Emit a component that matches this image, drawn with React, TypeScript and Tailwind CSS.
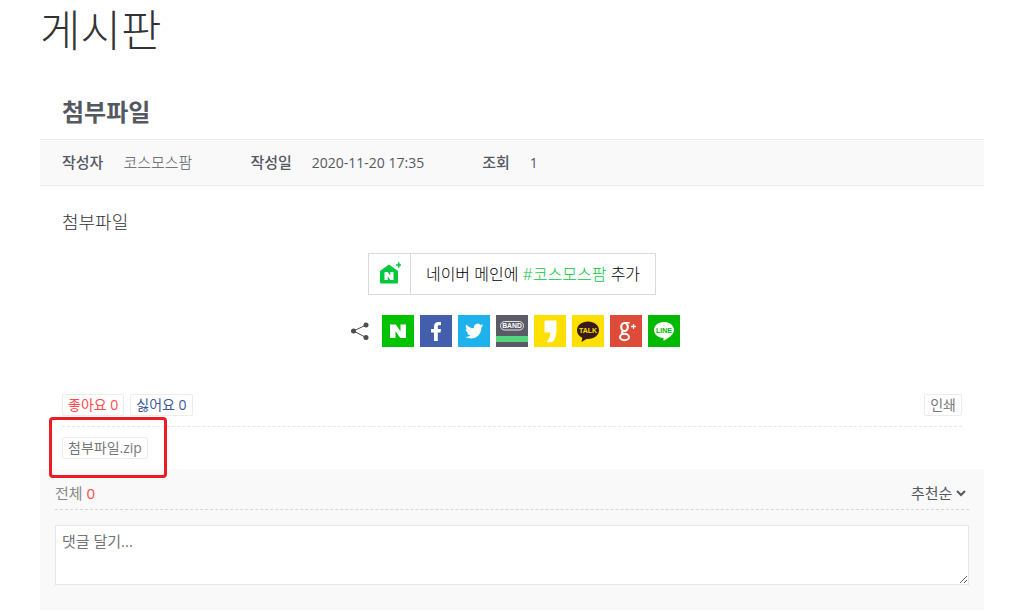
import type { ReactNode } from "react"

const meta = [
  { label: "작성자", value: "코스모스팜" },
  { label: "작성일", value: "2020-11-20 17:35" },
  { label: "조회", value: "1" },
]

const shareLinks: { name: string; className: string; icon: ReactNode }[] = [
  {
    name: "네이버",
    className: "bg-[#00c300]",
    icon: <path fill="#fff" d="M8 9.500h5.800l4.700 7v-7H24V23h-5.800l-4.700-7v7H8z" />,
  },
  {
    name: "페이스북",
    className: "bg-[#435eac]",
    icon: (
      <path fill="#fff" d="M14 26v-8.500h-3v-3.500h3v-2.500C14 8.600 15.600 7 18.300 7H21v3.300h-1.800c-1.100 0-1.400.5-1.400 1.400V14H21l-.5 3.500h-2.700V26z" />
    ),
  },
  {
    name: "트위터",
    className: "bg-[#1eb2ed]",
    icon: (
      <path
        fill="#fff"
        transform="translate(7 7) scale(0.76)"
        d="M23.950 4.570a10 10 0 0 1-2.820.770 4.960 4.960 0 0 0 2.160-2.720c-.95.550-2 .950-3.120 1.180a4.920 4.920 0 0 0-8.380 4.480C7.690 8.090 4.070 6.130 1.640 3.160a4.820 4.820 0 0 0-.67 2.480c0 1.710.87 3.210 2.190 4.090a4.900 4.900 0 0 1-2.230-.61v.06a4.920 4.920 0 0 0 3.950 4.820 5 5 0 0 1-2.210.09 4.940 4.940 0 0 0 4.600 3.420A9.870 9.870 0 0 1 0 19.540a13.990 13.990 0 0 0 7.550 2.210c9.050 0 14-7.500 14-13.980 0-.21 0-.42-.02-.63a9.940 9.940 0 0 0 2.460-2.550z"
      />
    ),
  },
  {
    name: "밴드",
    className: "bg-[#5b5a67]",
    icon: (
      <>
        <rect x="4.500" y="6.500" width="23" height="8.500" rx="4.200" fill="none" stroke="#e4e4e8" />
        <text x="16" y="13.300" textAnchor="middle" fontSize="6.800" fontWeight="700" fill="#fff" className="font-['Liberation_Sans',sans-serif]">BAND</text>
        <path fill="#54d67f" d="M0 21h32v6H0z" />
      </>
    ),
  },
  {
    name: "카카오스토리",
    className: "bg-[#fde000]",
    icon: <path fill="#fff" d="M10.500 5.500h12V15c0 5.500-1.500 10-4.500 12.300h-5.500c2.500-2.800 3.900-6 4-9.800h-6z" />,
  },
  {
    name: "카카오톡",
    className: "bg-[#fde000]",
    icon: (
      <>
        <path fill="#391b1b" d="M16 6.500c6.200 0 11 3.900 11 8.700s-4.800 8.700-11 8.700h-1.500L9.500 27l.8-4.300C7 21.200 5 18.500 5 15.200c0-4.800 4.800-8.700 11-8.700z" />
        <text x="16" y="17.900" textAnchor="middle" fontSize="7" fontWeight="700" fill="#fde000" className="font-['Liberation_Sans',sans-serif]">TALK</text>
      </>
    ),
  },
  {
    name: "구글 플러스",
    className: "bg-[#dd4b39]",
    icon: (
      <>
        <g fill="none" stroke="#fff">
          <ellipse cx="14.500" cy="12" rx="3.300" ry="4" strokeWidth="2.200" />
          <path strokeWidth="1.600" d="M15 7.800h4.800M13 16c-2.300 1.200-1.800 2.300 1 2.600" />
          <ellipse cx="14.500" cy="22" rx="4.500" ry="3.200" strokeWidth="2" />
        </g>
        <path fill="#fff" d="M22.900 9h1.200v1.800h1.800v1.400h-1.800V14h-1.200v-1.800h-1.800v-1.400h1.800z" />
      </>
    ),
  },
  {
    name: "라인",
    className: "bg-[#00b900]",
    icon: (
      <>
        <path fill="#fff" d="M16 7c5.500 0 10 3.500 10 8 0 4-5 8-10 10.500-.8.300-.6-.7-.5-2.500C10 22.800 6 19.400 6 15c0-4.500 4.500-8 10-8z" />
        <text x="16" y="17.500" textAnchor="middle" fontSize="7" fontWeight="700" fill="#00b900" className="font-['Liberation_Sans',sans-serif]">LINE</text>
      </>
    ),
  },
]

const smallButton = "h-[22px] rounded-xs border border-[#ececec] bg-white px-[5px] text-sm leading-5"

function NaverHouse() {
  return (
    <svg viewBox="0 0 22 24" className="h-6 w-[22px]" aria-hidden="true">
      <path fill="#03c73c" d="M1 9 10 2.500 19 9v11.500q0 1-1 1H2q-1 0-1-1zM17 2.200h2v-2h1.500v2h2v1.500h-2v2H19v-2h-2z" />
      <path fill="#fff" d="M5.500 10h3.300l2.500 3.800V10h3.200v8h-3.300l-2.500-3.800V18H5.500z" />
    </svg>
  )
}

function ShareIcon() {
  return (
    <svg viewBox="0 0 20 20" className="h-5 w-5" aria-label="공유">
      <path d="M16 4 3.500 10 16 16.500" fill="none" stroke="#4d4d4d" />
      <g fill="#4d4d4d">
        <circle cx="16" cy="4" r="2.500" />
        <circle cx="3.500" cy="10" r="2.500" />
        <circle cx="16" cy="16.500" r="2.500" />
      </g>
    </svg>
  )
}

function ShareRow() {
  return (
    <div className="mt-5 flex items-center justify-center gap-1.5">
      <div className="flex w-8 justify-center">
        <ShareIcon />
      </div>
      {shareLinks.map((link) => (
        <a key={link.name} href="#share" aria-label={link.name} className={`block h-8 w-8 ${link.className}`}>
          <svg viewBox="0 0 32 32" className="h-8 w-8" aria-hidden="true">
            {link.icon}
          </svg>
        </a>
      ))}
    </div>
  )
}

function Comments() {
  return (
    <section className="bg-[#f9f9f9] px-[15px] pt-3 pb-[25px]">
      <div className="flex h-[29px] items-center justify-between border-b border-dashed border-[#d5d5d5] pb-1 text-[15px] text-[#888]">
        <p>
          전체 <span className="text-[#ff4b3e]">0</span>
        </p>
        <select aria-label="정렬" className="bg-transparent text-[#545861]">
          <option>추천순</option>
          <option>최신순</option>
        </select>
      </div>
      <textarea
        aria-label="댓글"
        placeholder="댓글 달기..."
        className="mt-[15px] block h-[60px] w-full border border-[#e6e6e6] bg-white px-1.5 py-1 text-[15px] leading-[22px] placeholder:text-[#757575]"
      />
    </section>
  )
}

export default function App() {
  return (
    <main className="bg-white pr-9 pl-10 font-['Open_Sans','Noto_Sans_CJK_KR',sans-serif] text-[#333]">
      <h1 className="pt-0.5 text-[44px] leading-[56px] font-light">게시판</h1>

      <article>
        <h2 className="mt-[38px] mb-[11px] px-[22px] text-2xl font-bold text-[#545861]">첨부파일</h2>
        <dl className="flex h-[47px] items-center gap-[58px] border-y border-[#ececec] bg-[#f9f9f9] px-[22px] text-[#545861]">
          {meta.map((item) => (
            <div key={item.label} className="flex items-center gap-5">
              <dt className="text-[15px] font-medium">{item.label}</dt>
              <dd className={item.label === "작성자" ? "text-[15px] font-light" : "text-sm"}>{item.value}</dd>
            </div>
          ))}
        </dl>

        <div className="px-[22px]">
          <p className="mt-5 text-lg leading-8 font-light">첨부파일</p>

          <div className="mt-[15px] flex justify-center">
            <a href="#naver" className="flex h-[42px] w-72 border border-[#dadada] bg-white text-black">
              <span className="flex w-[42px] items-center justify-center border-r border-[#dadada]">
                <NaverHouse />
              </span>
              <span className="flex-1 text-center text-base leading-10 font-light whitespace-nowrap">
                네이버 메인에 <span className="text-[#03c73c]">#코스모스팜</span> 추가
              </span>
            </a>
          </div>
          <ShareRow />

          <div className="mt-[47px] flex justify-between border-b border-dashed border-[#e6e6e6] pb-2.5">
            <div className="flex gap-1.5">
              <button className={`${smallButton} text-[#ff4b4b]`}>좋아요 0</button>
              <button className={`${smallButton} text-[#3b5998]`}>싫어요 0</button>
            </div>
            <button className={`${smallButton} text-[#777]`}>인쇄</button>
          </div>

          <div className="relative py-2.5">
            <button className={`${smallButton} block text-[#777]`}>첨부파일.zip</button>
            <div className="pointer-events-none absolute -top-2.5 -left-[13px] h-[61px] w-[118px] rounded-sm border-3 border-[#ed1c24]" />
          </div>
        </div>
      </article>

      <Comments />
    </main>
  )
}
